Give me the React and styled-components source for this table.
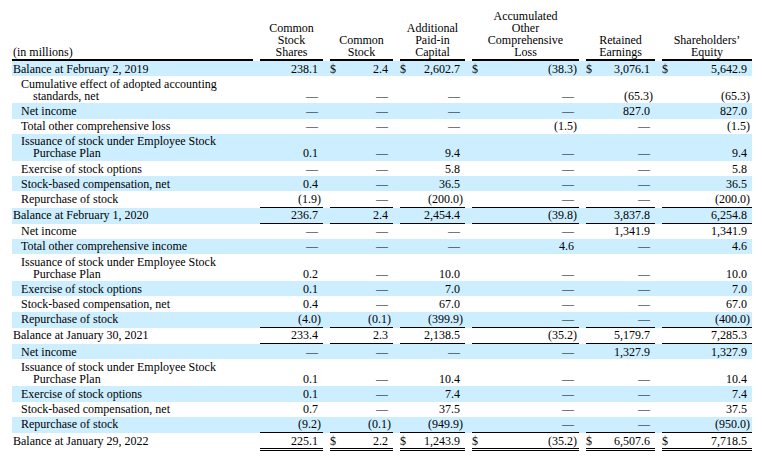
import React from "react";
import styled, { createGlobalStyle } from "styled-components";

const GlobalStyle = createGlobalStyle`
body {
  margin: 0;
  background: #fff;
  color: #000;
  font-family: "Liberation Serif", "Times New Roman", serif;
}
`;

const COLS = "241px 63px 63px 65px 107px 69px 90px";

const Page = styled.div`
padding: 10px 10px 0 12px;
font-size: 12px;
line-height: 12px;
`;

const HeadRow = styled.div`
display: grid;
grid-template-columns: ${COLS};
column-gap: 7px;
width: 740px;
align-items: end;
`;

const HeadCell = styled.div`
text-align: ${p => (p.$left ? "left" : "center")};
padding: 0 0 1px ${p => (p.$left ? "1px" : "0")};
border-bottom: 2px solid #000;
height: 100%;
display: flex;
flex-direction: column;
justify-content: flex-end;
`;

const Row = styled.div`
display: grid;
grid-template-columns: ${COLS};
column-gap: 7px;
width: 740px;
background: ${p => (p.$shaded ? "#cceeff" : "transparent")};
`;

const Label = styled.div`
padding: 1.6px 0 1.6px ${p => (p.$balance ? "1px" : "21px")};
text-indent: ${p => (p.$balance ? "0" : "-12px")};
`;

const Num = styled.div`
display: flex;
justify-content: ${p => (p.$dollar ? "space-between" : "flex-end")};
align-items: flex-end;
padding: 1.6px 5px 1.6px 0;
white-space: nowrap;
border-bottom: ${p =>
    p.$rule === "double" ? "3px double #000" : p.$rule === "single" ? "1px solid #000" : "none"};
`;

const Paren = styled.span`
margin-right: -3px;
`;

const Value = ({ v }) => {
    if (v.startsWith("(")) {
        return <span>{v.slice(0, -1)}<Paren>)</Paren></span>;
    }
    return <span>{v}</span>;
};

const D = "—";

const rows = [
    { label: "Balance at February 2, 2019", balance: true, dollars: true, vals: ["238.1", "2.4", "2,602.7", "(38.3)", "3,076.1", "5,642.9"] },
    { label: ["Cumulative effect of adopted accounting", "standards, net"], vals: [D, D, D, D, "(65.3)", "(65.3)"] },
    { label: "Net income", vals: [D, D, D, D, "827.0", "827.0"] },
    { label: "Total other comprehensive loss", vals: [D, D, D, "(1.5)", D, "(1.5)"] },
    { label: ["Issuance of stock under Employee Stock", "Purchase Plan"], vals: ["0.1", D, "9.4", D, D, "9.4"] },
    { label: "Exercise of stock options", vals: [D, D, "5.8", D, D, "5.8"] },
    { label: "Stock-based compensation, net", vals: ["0.4", D, "36.5", D, D, "36.5"] },
    { label: "Repurchase of stock", rule: "single", vals: ["(1.9)", D, "(200.0)", D, D, "(200.0)"] },
    { label: "Balance at February 1, 2020", balance: true, rule: "single", vals: ["236.7", "2.4", "2,454.4", "(39.8)", "3,837.8", "6,254.8"] },
    { label: "Net income", vals: [D, D, D, D, "1,341.9", "1,341.9"] },
    { label: "Total other comprehensive income", vals: [D, D, D, "4.6", D, "4.6"] },
    { label: ["Issuance of stock under Employee Stock", "Purchase Plan"], vals: ["0.2", D, "10.0", D, D, "10.0"] },
    { label: "Exercise of stock options", vals: ["0.1", D, "7.0", D, D, "7.0"] },
    { label: "Stock-based compensation, net", vals: ["0.4", D, "67.0", D, D, "67.0"] },
    { label: "Repurchase of stock", rule: "single", vals: ["(4.0)", "(0.1)", "(399.9)", D, D, "(400.0)"] },
    { label: "Balance at January 30, 2021", balance: true, rule: "single", vals: ["233.4", "2.3", "2,138.5", "(35.2)", "5,179.7", "7,285.3"] },
    { label: "Net income", vals: [D, D, D, D, "1,327.9", "1,327.9"] },
    { label: ["Issuance of stock under Employee Stock", "Purchase Plan"], vals: ["0.1", D, "10.4", D, D, "10.4"] },
    { label: "Exercise of stock options", vals: ["0.1", D, "7.4", D, D, "7.4"] },
    { label: "Stock-based compensation, net", vals: ["0.7", D, "37.5", D, D, "37.5"] },
    { label: "Repurchase of stock", rule: "single", vals: ["(9.2)", "(0.1)", "(949.9)", D, D, "(950.0)"] },
    { label: "Balance at January 29, 2022", balance: true, dollars: true, rule: "double", vals: ["225.1", "2.2", "1,243.9", "(35.2)", "6,507.6", "7,718.5"] },
];

const headers = [
    ["Common", "Stock", "Shares"],
    ["Common", "Stock"],
    ["Additional", "Paid-in", "Capital"],
    ["Accumulated", "Other", "Comprehensive", "Loss"],
    ["Retained", "Earnings"],
    ["Shareholders’", "Equity"],
];

export default function App() {
    return (
        <Page>
            <GlobalStyle />
            <HeadRow>
                <HeadCell $left>(in millions)</HeadCell>
                {headers.map((h, i) => (
                    <HeadCell key={i}>
                        {h.map(line => <div key={line}>{line}</div>)}
                    </HeadCell>
                ))}
            </HeadRow>
            {rows.map((r, i) => (
                <Row key={i} $shaded={i % 2 === 0}>
                    <Label $balance={r.balance}>
                        {Array.isArray(r.label) ? <>{r.label[0]}<br />{r.label[1]}</> : r.label}
                    </Label>
                    {r.vals.map((v, j) => {
                        const dollar = r.dollars && j > 0;
                        return (
                            <Num key={j} $dollar={dollar} $rule={r.rule}>
                                {dollar && <span>$</span>}
                                <Value v={v} />
                            </Num>
                        );
                    })}
                </Row>
            ))}
        </Page>
    );
}
